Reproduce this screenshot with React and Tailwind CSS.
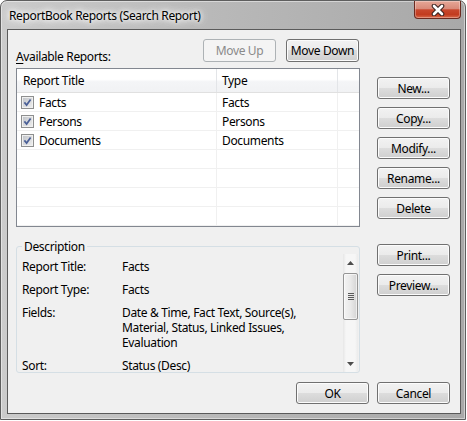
import React from "react";

function Btn({ children, className = "", disabled = false, tall = false }) {
  return (
    <div
      className={`${tall ? "h-[23px]" : "h-[22px]"} w-[73px] shrink-0 rounded-[3px] border flex items-center justify-center ${
        disabled
          ? "border-[#adb2b5] bg-[#f4f4f4] text-[#8a8a8a]"
          : "border-[#707070] bg-[linear-gradient(#f2f2f2_0%,#ebebeb_50%,#dddddd_50%,#cfcfcf_100%)] shadow-[inset_0_0_0_1px_#fcfcfc] text-black"
      } ${className}`}
    >
      {children}
    </div>
  );
}

function Check() {
  return (
    <svg width="13" height="13" viewBox="0 0 13 13" className="shrink-0">
      <defs>
        <linearGradient id="cbg" x1="0" y1="0" x2="1" y2="1">
          <stop offset="0" stopColor="#c3c6cb" />
          <stop offset="1" stopColor="#ececec" />
        </linearGradient>
      </defs>
      <rect x="0.5" y="0.5" width="12" height="12" fill="#f0f0f0" stroke="#8e8f8f" />
      <rect x="2" y="2" width="9" height="9" fill="url(#cbg)" />
      <path d="M3.4 6.4 L5.6 9 L9.6 3.4" fill="none" stroke="#4a5f97" strokeWidth="1.7" />
    </svg>
  );
}

function Row({ title, type }) {
  return (
    <div className="h-[19px] shrink-0 flex border-b border-[#f0f0f0]">
      <div className="w-[200px] border-r border-[#f0f0f0] flex items-center pl-[4px] gap-[5px]">
        {title && <Check />}
        <span>{title}</span>
      </div>
      <div className="w-[121px] border-r border-[#f0f0f0] flex items-center pl-[5px]">{type}</div>
      <div className="flex-1" />
    </div>
  );
}

function Arrow({ down = false }) {
  return (
    <svg width="7" height="4" viewBox="0 0 7 4">
      {down ? <path d="M0 0 H7 L3.5 4 Z" fill="#4d4d4d" /> : <path d="M0 4 H7 L3.5 0 Z" fill="#4d4d4d" />}
    </svg>
  );
}

export default function App() {
  return (
    <div className="w-[467px] h-[421px] bg-white font-['Noto_Sans',sans-serif] text-[12px] leading-[15px] tracking-[-0.35px] text-black">
      <div className="w-[466px] h-[420px] flex flex-col rounded-t-[7px] border border-[#5e5e5e] bg-[linear-gradient(90deg,#cbcbcb_0%,#b9b9b9_45%,#a8a8a8_100%)] shadow-[inset_0_0_0_1px_rgba(255,255,255,0.45)] pl-[6px] pr-[4px] pb-[5px]">
        <div className="h-[28px] shrink-0 flex items-start justify-between">
          <div className="mt-[7px] ml-[2px] [text-shadow:0_0_10px_#ffffff,0_0_8px_#ffffff,0_0_4px_#ffffff]">
            ReportBook Reports (Search Report)
          </div>
          <div className="w-[47px] h-[18px] rounded-b-[4px] border border-t-0 border-[#6b2a20] bg-[linear-gradient(#e6a797_0%,#d98a79_45%,#c8472d_52%,#c23b1f_80%,#d96b4c_100%)] shadow-[inset_0_0_0_1px_rgba(255,255,255,0.3)] flex items-center justify-center">
            <svg width="14" height="12" viewBox="0 0 14 12">
              <path d="M3 2 L11 10 M11 2 L3 10" stroke="#3b2320" strokeWidth="4.6" strokeLinecap="round" />
              <path d="M3 2 L11 10 M11 2 L3 10" stroke="#ffffff" strokeWidth="2.6" strokeLinecap="round" />
            </svg>
          </div>
        </div>
        <div className="flex-1 border border-[#5a5a5a] bg-[#f0f0f0] flex flex-col px-[8px] pt-[9px]">
          <div className="flex">
            <div className="w-[344px] shrink-0 flex flex-col">
              <div className="h-[29px] flex items-start">
                <div className="mt-[10px]">
                  <span className="underline underline-offset-2">A</span>vailable Reports:
                </div>
                <div className="ml-auto mr-[1px] flex gap-[10px]">
                  <Btn disabled tall>Move Up</Btn>
                  <Btn tall>Move Down</Btn>
                </div>
              </div>
              <div className="h-[159px] border border-[#828790] bg-white flex flex-col overflow-hidden">
                <div className="h-[24px] shrink-0 flex border-b border-[#e0e0e0] bg-[linear-gradient(#ffffff_0%,#ffffff_45%,#f4f5f7_55%,#f1f2f4_100%)]">
                  <div className="w-[200px] border-r border-[#e3e5e8] pl-[6px] flex items-center">Report Title</div>
                  <div className="w-[121px] border-r border-[#e3e5e8] pl-[5px] flex items-center">Type</div>
                  <div className="flex-1" />
                </div>
                <Row title="Facts" type="Facts" />
                <Row title="Persons" type="Persons" />
                <Row title="Documents" type="Documents" />
                <Row />
                <Row />
                <Row />
                <Row />
              </div>
              <fieldset className="mt-[12px] border border-[#d5dfe5] rounded-[3px]">
                <legend className="ml-[5px] px-[2px] leading-[15px]">Description</legend>
                <div className="h-[118px] flex">
                  <div className="flex-1 overflow-hidden pl-[5px] pt-[5px] flex flex-col gap-[8px]">
                    <div className="flex">
                      <div className="w-[100px] shrink-0">Report Title:</div>
                      <div>Facts</div>
                    </div>
                    <div className="flex">
                      <div className="w-[100px] shrink-0">Report Type:</div>
                      <div>Facts</div>
                    </div>
                    <div className="flex">
                      <div className="w-[100px] shrink-0">Fields:</div>
                      <div className="flex flex-col">
                        <div>Date &amp; Time, Fact Text, Source(s),</div>
                        <div>Material, Status, Linked Issues,</div>
                        <div>Evaluation</div>
                      </div>
                    </div>
                    <div className="flex">
                      <div className="w-[100px] shrink-0">Sort:</div>
                      <div>Status (Desc)</div>
                    </div>
                  </div>
                  <div className="w-[15px] mr-[1px] flex flex-col bg-[linear-gradient(90deg,#e6e6e6_0%,#f6f6f6_20%,#f6f6f6_80%,#ebebeb_100%)]">
                    <div className="h-[17px] flex items-center justify-center">
                      <Arrow />
                    </div>
                    <div className="mt-[2px] h-[47px] rounded-[2px] border border-[#959595] bg-[linear-gradient(90deg,#f4f4f4_0%,#e9e9e9_50%,#d4d4d4_100%)] shadow-[inset_0_0_0_1px_rgba(255,255,255,0.6)] flex flex-col items-center justify-center gap-[1px]">
                      <div className="w-[6px] h-[1px] bg-[#5a5a5a]" />
                      <div className="w-[6px] h-[1px] bg-[#5a5a5a]" />
                      <div className="w-[6px] h-[1px] bg-[#5a5a5a]" />
                      <div className="w-[6px] h-[1px] bg-[#5a5a5a]" />
                    </div>
                    <div className="flex-1" />
                    <div className="h-[17px] flex items-center justify-center">
                      <Arrow down />
                    </div>
                  </div>
                </div>
              </fieldset>
            </div>
            <div className="w-[73px] ml-[17px] flex flex-col pt-[38px] gap-[8px]">
              <Btn>New...</Btn>
              <Btn>Copy...</Btn>
              <Btn>Modify...</Btn>
              <Btn>Rename...</Btn>
              <Btn>Delete</Btn>
              <Btn className="mt-[17px]">Print...</Btn>
              <Btn>Preview...</Btn>
            </div>
          </div>
          <div className="mt-[9px] flex justify-end gap-[8px] pr-[2px]">
            <Btn>OK</Btn>
            <Btn>Cancel</Btn>
          </div>
        </div>
      </div>
    </div>
  );
}
